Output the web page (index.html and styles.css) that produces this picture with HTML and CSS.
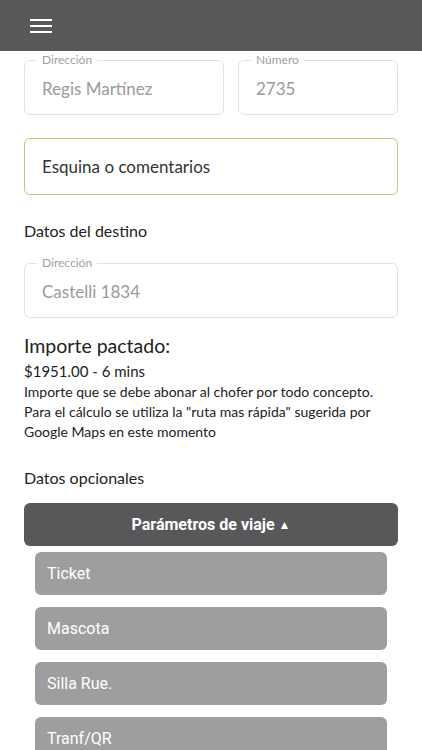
FILE: index.html
```html
<!DOCTYPE html>
<html lang="es">
<head>
<meta charset="utf-8">
<link rel="stylesheet" href="styles.css">
</head>
<body>
<header class="topbar">
  <svg class="menu" width="22" height="16" viewBox="0 0 22 16"><path d="M1 2H21M1 8H21M1 14H21" stroke="#fff" stroke-width="2" stroke-linecap="square"/></svg>
</header>
<main class="content">
  <div class="row">
    <fieldset class="field grow">
      <legend>Dirección</legend>
      <div class="value">Regis Martínez</div>
    </fieldset>
    <fieldset class="field num">
      <legend>Número</legend>
      <div class="value">2735</div>
    </fieldset>
  </div>
  <div class="comment">Esquina o comentarios</div>
  <h3 class="section">Datos del destino</h3>
  <fieldset class="field">
    <legend>Dirección</legend>
    <div class="value">Castelli 1834</div>
  </fieldset>
  <h2 class="importe">Importe pactado:</h2>
  <p class="price">$1951.00 - 6 mins</p>
  <p class="note">Importe que se debe abonar al chofer por todo concepto. Para el cálculo se utiliza la "ruta mas rápida" sugerida por Google Maps en este momento</p>
  <h3 class="section opt">Datos opcionales</h3>
  <button class="toggle">Parámetros de viaje <span class="tri">▲</span></button>
  <ul class="params">
    <li>Ticket</li>
    <li>Mascota</li>
    <li>Silla Rue.</li>
    <li>Tranf/QR</li>
  </ul>
</main>
</body>
</html>
```
FILE: styles.css
```css
* { box-sizing: border-box; }
html, body { margin: 0; padding: 0; background: #fff; }
body { font-family: "Lato", "Noto Sans", sans-serif; color: #222; height: 750px; overflow: hidden; }
.topbar { height: 51px; background: #58585a; display: flex; align-items: center; padding-left: 30px; position: relative; z-index: 2; }
.menu { display: block; margin-top: 0; }
.content { padding: 0 24px 0 24px; display: flex; flex-direction: column; }
.row { display: flex; gap: 14px; margin-top: 2px; }
.field { margin: 0; border: 1px solid #e2e2e2; border-radius: 6px; padding: 0 17px; height: 62px; min-width: 0; }
.field legend { font-size: 12px; color: #a0a0a0; padding: 0 5px; margin-left: -5px; line-height: 14px; }
.field .value { font-size: 17px; color: #9a9a9a; line-height: 20px; margin-top: 12px; }
.grow { flex: 1; }
.num { width: 160px; }
.comment { margin-top: 23px; height: 57px; border: 1.5px solid #b8cc72; border-radius: 6px; display: flex; align-items: center; padding-left: 17px; font-size: 17px; color: #333; }
.section { font-size: 16px; font-weight: 400; margin: 26px 0 15px; line-height: 20px; color: #222; }
.importe { font-size: 19.5px; font-weight: 400; margin: 16px 0 0; line-height: 24px; color: #222; }
.price { font-size: 15px; margin: 3px 0 0; line-height: 20px; }
.note { font-size: 14px; margin: 1px 0 0; line-height: 20px; max-width: 360px; }
.opt { margin: 26px 0 15px; }
.toggle { height: 43px; border: none; border-radius: 6px; background: #58585a; color: #fff; font-family: "Roboto", "Liberation Sans", sans-serif; font-weight: 700; font-size: 16px; width: 100%; }
.tri { font-size: 12px; vertical-align: 1px; }
.params { list-style: none; margin: 6px 11px 0; padding: 0; display: flex; flex-direction: column; gap: 12px; }
.params li { height: 43px; border-radius: 6px; background: #9e9ea0; color: #fff; font-family: "Roboto", "Liberation Sans", sans-serif; font-size: 16px; display: flex; align-items: center; padding-left: 12px; }
```
